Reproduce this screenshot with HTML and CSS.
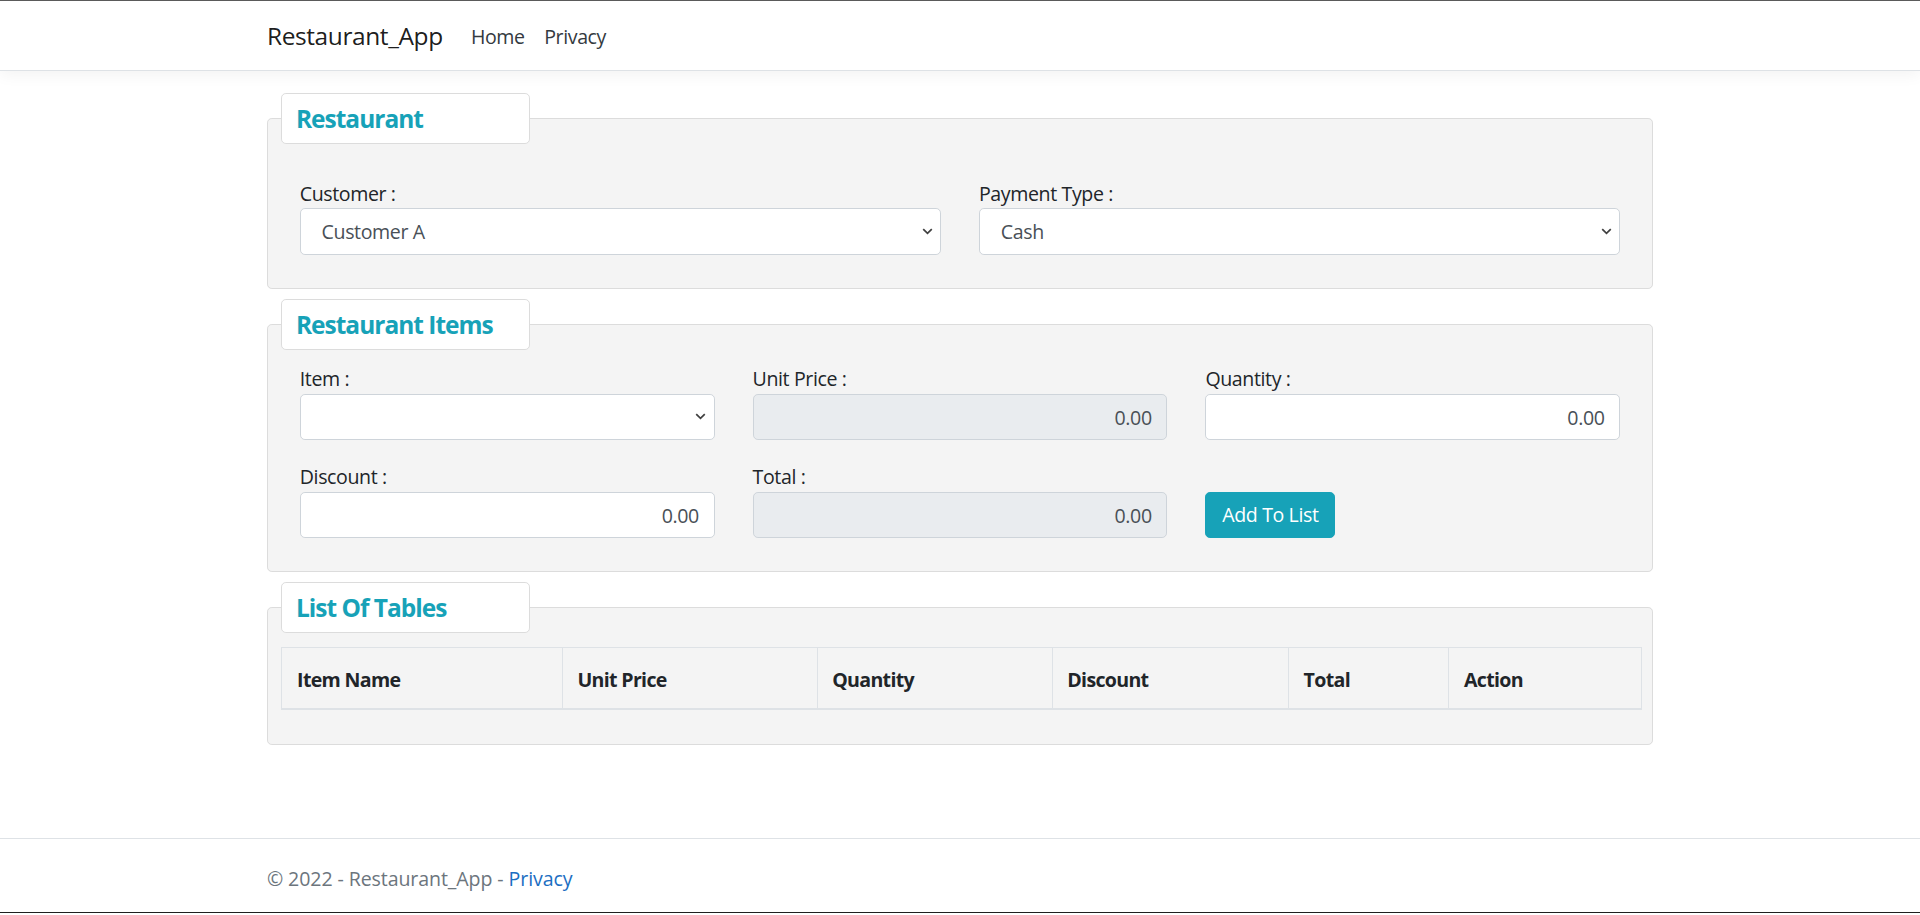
FILE: index.html
```html
<!DOCTYPE html>
<html lang="en">
<head>
<meta charset="utf-8">
<title>Restaurant_App</title>
<link rel="stylesheet" href="styles.css">
</head>
<body>
<div class="page">
  <header class="navbar">
    <div class="container nav-inner">
      <a class="brand" href="#">Restaurant_App</a>
      <ul class="nav-links">
        <li><a class="nav-link" href="#">Home</a></li>
        <li><a class="nav-link" href="#">Privacy</a></li>
      </ul>
    </div>
  </header>

  <main class="container main">
    <fieldset class="panel">
      <legend class="panel-title">Restaurant</legend>
      <div class="form-grid cols-2 first-row">
        <div class="field">
          <label class="field-label">Customer :</label>
          <select class="control select"><option>Customer A</option></select>
        </div>
        <div class="field">
          <label class="field-label">Payment Type :</label>
          <select class="control select"><option>Cash</option></select>
        </div>
      </div>
    </fieldset>

    <fieldset class="panel">
      <legend class="panel-title">Restaurant Items</legend>
      <div class="form-grid cols-3">
        <div class="field">
          <label class="field-label">Item :</label>
          <select class="control select"><option></option></select>
        </div>
        <div class="field">
          <label class="field-label">Unit Price :</label>
          <input class="control number readonly" type="text" value="0.00" readonly>
        </div>
        <div class="field">
          <label class="field-label">Quantity :</label>
          <input class="control number" type="text" value="0.00">
        </div>
        <div class="field">
          <label class="field-label">Discount :</label>
          <input class="control number" type="text" value="0.00">
        </div>
        <div class="field">
          <label class="field-label">Total :</label>
          <input class="control number readonly" type="text" value="0.00" readonly>
        </div>
        <div class="field field-action">
          <button class="btn-info" type="button">Add To List</button>
        </div>
      </div>
    </fieldset>

    <fieldset class="panel panel-table">
      <legend class="panel-title">List Of Tables</legend>
      <table class="data-table">
        <colgroup>
          <col class="w-name"><col class="w-price"><col class="w-qty"><col class="w-disc"><col class="w-total"><col class="w-action">
        </colgroup>
        <thead>
          <tr>
            <th>Item Name</th>
            <th>Unit Price</th>
            <th>Quantity</th>
            <th>Discount</th>
            <th>Total</th>
            <th>Action</th>
          </tr>
        </thead>
        <tbody></tbody>
      </table>
    </fieldset>
  </main>

  <footer class="footer">
    <div class="container">&copy; 2022 - Restaurant_App - <a class="footer-link" href="#">Privacy</a></div>
  </footer>
</div>
</body>
</html>
```

FILE: styles.css
```css
html {
  zoom: 1.2245;
}

* {
  box-sizing: border-box;
}

body {
  margin: 0;
  font-family: "Open Sans", "Noto Sans", "Liberation Sans", sans-serif;
  font-size: 16px;
  line-height: 1.5;
  letter-spacing: -0.02em;
  color: #212529;
  background: #fff;
}

.page {
  border-top: 1px solid #5c5c5c;
  border-bottom: 1px solid #1f1f1f;
}

.container {
  width: 1132px;
  margin: 0 auto;
}

/* navbar */
.navbar {
  background: #fff;
  border-bottom: 1px solid #dee2e6;
  box-shadow: 0 4px 12px rgba(0, 0, 0, 0.05);
  padding: 8px 0;
}

.nav-inner {
  display: flex;
  align-items: center;
}

.brand {
  font-size: 20px;
  line-height: 30px;
  padding: 6px 0 4px;
  margin-right: 15px;
  color: rgba(0, 0, 0, 0.9);
  text-decoration: none;
}

.nav-links {
  display: flex;
  list-style: none;
  margin: 0;
  padding: 0;
}

.nav-link {
  display: block;
  padding: 9px 8px 7px;
  color: #343a40;
  text-decoration: none;
}

/* main */
.main {
  padding-top: 18px;
  padding-bottom: 68px;
}

.panel {
  margin: 0 0 8px;
  padding: 12px 12px 12px;
  background: #f4f4f4;
  border: 1px solid #dcdcdc;
  border-radius: 4px;
  min-width: 0;
}

.panel-title {
  width: 203px;
  margin-left: -1px;
  padding: 6px 11px 4px;
  background: #fff;
  border: 1px solid #dcdcdc;
  border-radius: 4px;
  font-size: 20px;
  line-height: 30px;
  font-weight: 700;
  letter-spacing: -0.04em;
  color: #17a2b8;
}

.form-grid {
  display: grid;
  column-gap: 31px;
  row-gap: 18px;
  padding: 0 14px 15px;
}

.cols-2 {
  grid-template-columns: 1fr 1fr;
}

.cols-3 {
  grid-template-columns: 1fr 1fr 1fr;
}

.first-row {
  margin-top: 17px;
}

.field {
  display: flex;
  flex-direction: column;
}

.field-action {
  justify-content: flex-end;
  align-items: flex-start;
}

.field-label {
  line-height: 24px;
}

.control {
  display: block;
  width: 100%;
  height: 38px;
  padding: 6px 12px;
  font-family: inherit;
  font-size: 16px;
  line-height: 24px;
  letter-spacing: -0.02em;
  color: #495057;
  background: #fff;
  border: 1px solid #ced4da;
  border-radius: 4px;
  outline: none;
}

.select {
  appearance: none;
  -webkit-appearance: none;
  padding-left: 17px;
  background-image: url("data:image/svg+xml,%3Csvg xmlns='http://www.w3.org/2000/svg' viewBox='0 0 9 6'%3E%3Cpath d='M1 1l3.5 3.5L8 1' fill='none' stroke='%23404040' stroke-width='1.4'/%3E%3C/svg%3E");
  background-repeat: no-repeat;
  background-position: right 6px center;
  background-size: 9px 6px;
}

.number {
  text-align: right;
}

.readonly {
  background: #e9ecef;
}

.btn-info {
  height: 38px;
  padding: 6px 13px;
  font-family: inherit;
  font-size: 16px;
  line-height: 24px;
  letter-spacing: -0.02em;
  color: #fff;
  background: #17a2b8;
  border: 1px solid #17a2b8;
  border-radius: 4px;
}

/* table */
.panel-table {
  padding-top: 11px;
}

.data-table {
  width: 1110px;
  margin: 0 0 16px -1px;
  border-collapse: collapse;
  table-layout: fixed;
}

.w-name { width: 229px; }
.w-price { width: 208px; }
.w-qty { width: 192px; }
.w-disc { width: 193px; }
.w-total { width: 131px; }
.w-action { width: 157px; }

.data-table th {
  text-align: left;
  font-weight: 700;
  letter-spacing: -0.035em;
  padding: 14px 12px 11px;
  line-height: 24px;
  border: 1px solid #dee2e6;
  border-bottom: 2px solid #dee2e6;
}

/* footer */
.footer {
  border-top: 1px solid #dee2e6;
  padding-top: 5px;
  line-height: 55px;
  color: #6c757d;
  letter-spacing: -0.005em;
  white-space: nowrap;
}

.footer-link {
  color: #1b6ec2;
  text-decoration: none;
}
```
